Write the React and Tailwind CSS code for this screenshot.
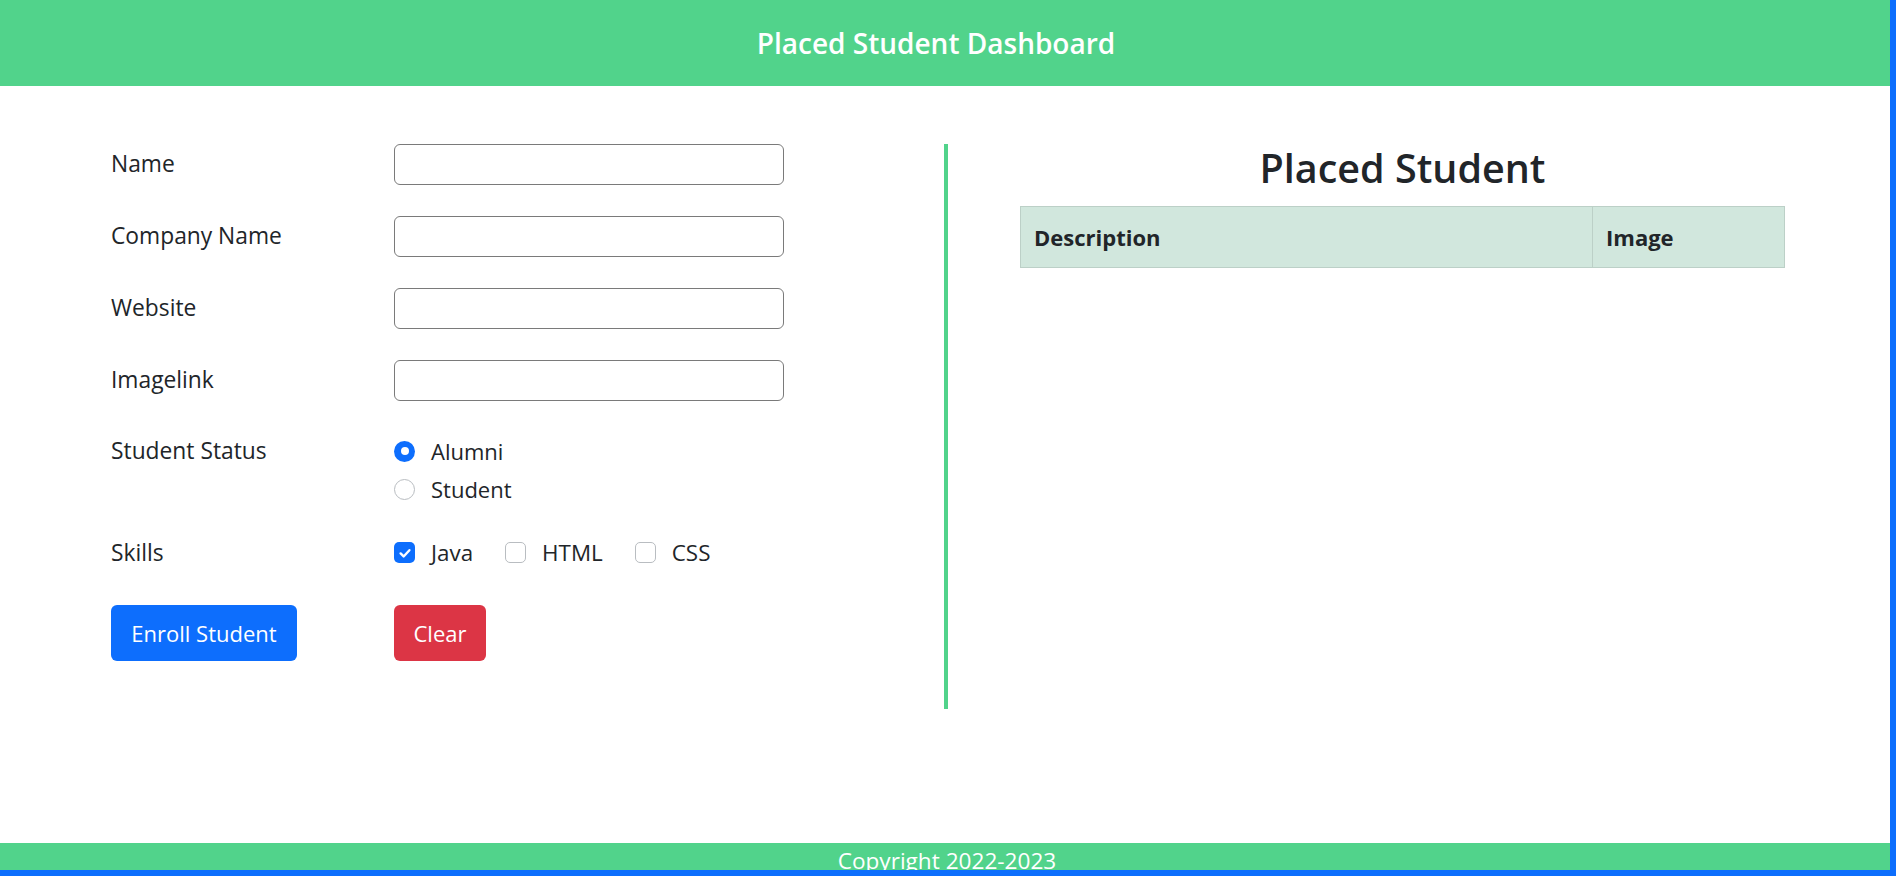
import { useState } from 'react';

const font = "font-['Open_Sans',sans-serif]";

function Field({ label }) {
  return (
    <div className="mb-[31px] flex h-[41px] items-center">
      <label className="w-[283px] text-[22.8px] text-[#212529]">{label}</label>
      <input
        type="text"
        className="h-[41px] w-[390px] rounded-[6px] border border-[#7a7a7a] bg-white px-3 text-[20px] outline-none"
      />
    </div>
  );
}

function Radio({ label, checked, onClick }) {
  return (
    <div className="flex h-[38px] cursor-pointer items-center" onClick={onClick}>
      {checked ? (
        <span className="grid h-[21px] w-[21px] place-items-center rounded-full bg-[#0d6efd]">
          <span className="h-[8px] w-[8px] rounded-full bg-white" />
        </span>
      ) : (
        <span className="h-[21px] w-[21px] rounded-full border border-[#b9bdc1] bg-white" />
      )}
      <span className="ml-[16px] text-[22px] text-[#212529]">{label}</span>
    </div>
  );
}

function Check({ label, checked, onClick }) {
  return (
    <div className="mr-[32px] flex cursor-pointer items-center" onClick={onClick}>
      {checked ? (
        <span className="grid h-[21px] w-[21px] place-items-center rounded-[5px] bg-[#0d6efd]">
          <svg width="16" height="16" viewBox="0 0 20 20" fill="none">
            <path d="M4.5 10.5l3.8 3.8L15.5 6.5" stroke="#fff" strokeWidth="3" strokeLinecap="round" strokeLinejoin="round" />
          </svg>
        </span>
      ) : (
        <span className="h-[21px] w-[21px] rounded-[5px] border border-[#b9bdc1] bg-white" />
      )}
      <span className="ml-[16px] text-[22.4px] text-[#212529]">{label}</span>
    </div>
  );
}

export default function App() {
  const [status, setStatus] = useState('Alumni');
  const [skills, setSkills] = useState({ Java: true, HTML: false, CSS: false });

  const toggle = (k) => setSkills((s) => ({ ...s, [k]: !s[k] }));

  return (
    <div className={`${font} flex h-[876px] w-full flex-col overflow-hidden border-r-[6px] border-b-[6px] border-[#0d6efd] bg-white`}>
      {/* Header */}
      <header className="flex h-[86px] shrink-0 items-center justify-center bg-[#51d38b] pr-[18px]">
        <h1 className="text-[28px] font-semibold text-white">Placed Student Dashboard</h1>
      </header>

      <main className="flex flex-1 items-start pt-[58px]">
        {/* Form */}
        <div className="w-[944px] pl-[111px]">
          <Field label="Name" />
          <Field label="Company Name" />
          <Field label="Website" />
          <Field label="Imagelink" />

          <div className="mt-[1px] flex">
            <div className="flex h-[38px] w-[283px] items-center text-[22.8px] text-[#212529]">Student Status</div>
            <div>
              <Radio label="Alumni" checked={status === 'Alumni'} onClick={() => setStatus('Alumni')} />
              <Radio label="Student" checked={status === 'Student'} onClick={() => setStatus('Student')} />
            </div>
          </div>

          <div className="mt-[26px] flex h-[38px] items-center">
            <div className="w-[283px] text-[22.8px] text-[#212529]">Skills</div>
            <div className="flex items-center">
              {['Java', 'HTML', 'CSS'].map((k) => (
                <Check key={k} label={k} checked={skills[k]} onClick={() => toggle(k)} />
              ))}
            </div>
          </div>

          <div className="mt-[33px] flex">
            <div className="w-[283px]">
              <button className="h-[56px] w-[186px] rounded-[6px] bg-[#0d6efd] text-[22px] text-white">
                Enroll Student
              </button>
            </div>
            <button
              className="h-[56px] w-[92px] rounded-[6px] bg-[#dc3545] text-[22px] text-white"
              onClick={() => {
                setStatus('Alumni');
                setSkills({ Java: false, HTML: false, CSS: false });
              }}
            >
              Clear
            </button>
          </div>
        </div>

        {/* Table */}
        <div className="h-[565px] flex-1 border-l-4 border-[#51d38b]">
          <div className="ml-[72px] w-[765px]">
            <h2 className="text-center text-[39.5px] font-semibold leading-[48px] text-[#212529]">Placed Student</h2>
            <table className="mt-[14px] w-full border-collapse bg-[#d1e7dd] text-left text-[22px] text-[#212529]">
              <thead>
                <tr className="h-[61px]">
                  <th className="border border-[#bcd0c7] pl-[13px] font-bold">Description</th>
                  <th className="w-[192px] border border-[#bcd0c7] pl-[13px] font-bold">Image</th>
                </tr>
              </thead>
              <tbody />
            </table>
          </div>
        </div>
      </main>

      {/* Footer */}
      <footer className="h-[27px] shrink-0 overflow-hidden bg-[#51d38b] pl-[4px] text-center">
        <p className="pt-[3px] text-[22.6px] leading-[30px] text-white">Copyright 2022-2023</p>
      </footer>
    </div>
  );
}
